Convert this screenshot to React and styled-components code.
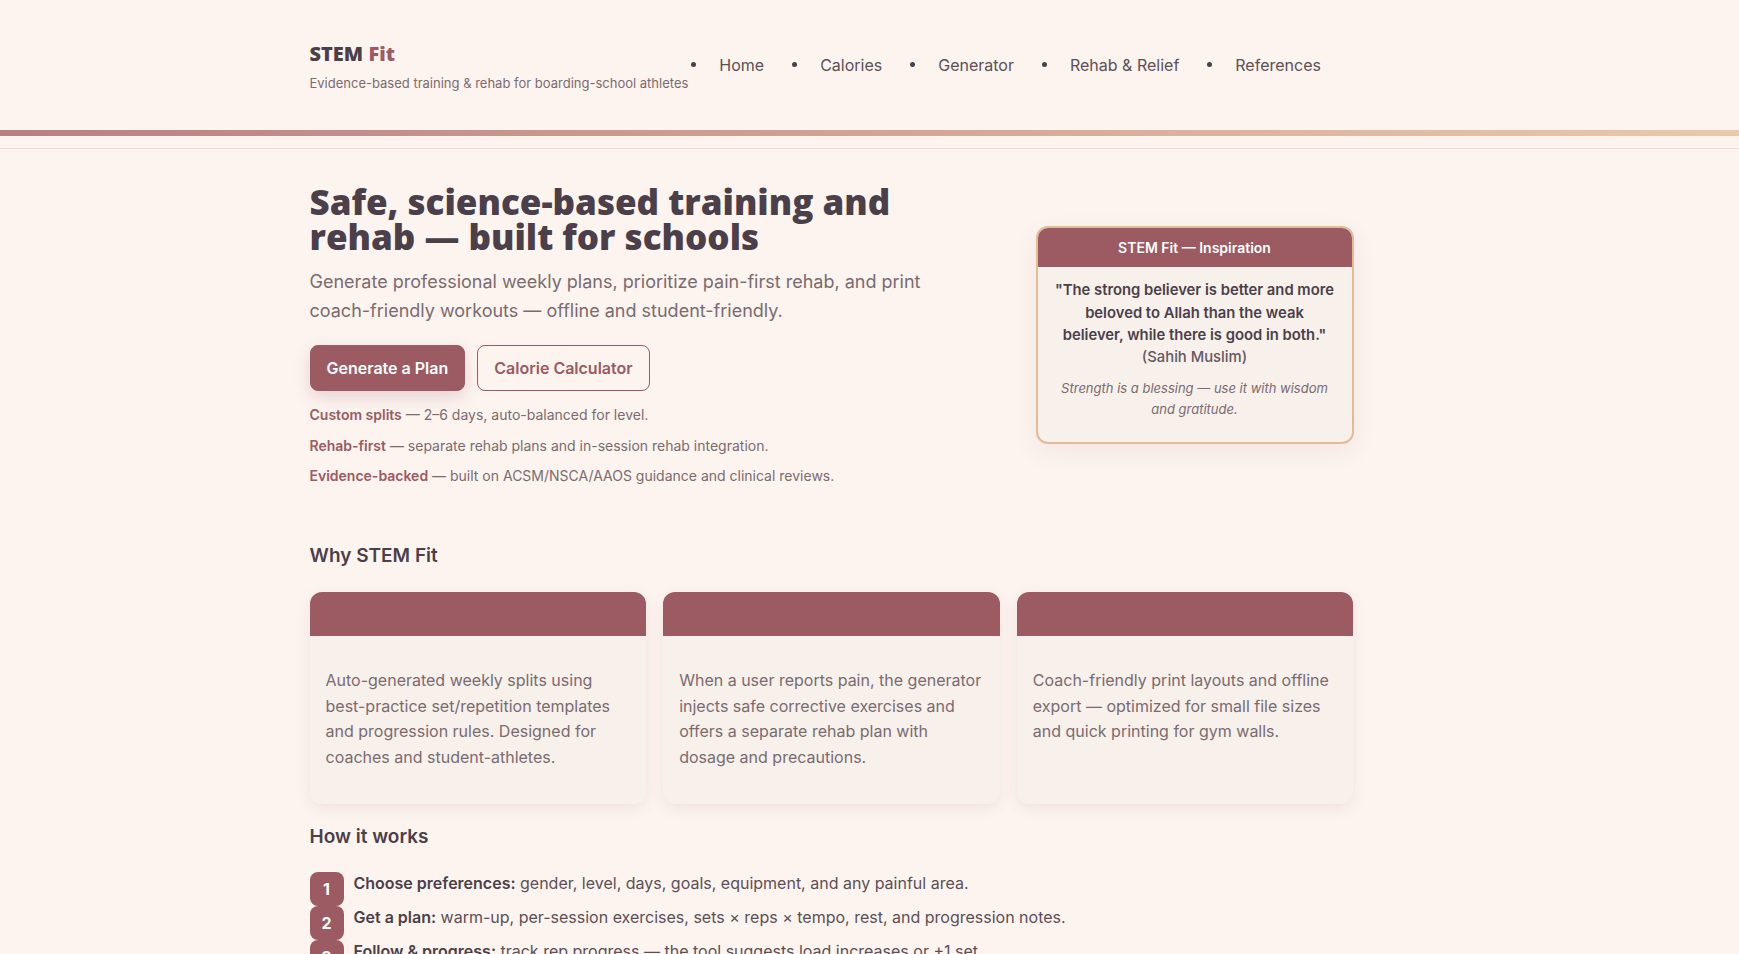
import React from "react";
import styled, { createGlobalStyle } from "styled-components";

const C = {
  bg: "#fdf4ef",
  primary: "#9c5a62",
  dark: "#4b3f4a",
  text: "#5c4f57",
  muted: "#7b6b70",
  card: "#f7f0eb",
  tan: "#e3bb96",
};

const Global = createGlobalStyle`
  * { box-sizing: border-box; }
  body {
    margin: 0;
    background: ${C.bg};
    font-family: Inter, "Noto Sans", sans-serif;
    color: ${C.dark};
  }
  p { margin: 0; }
`;

const Container = styled.div`
  max-width: 1120px;
  margin: 0 auto;
`;

const Inner = styled.div`
  width: 1044px;
`;

const Header = styled.header`
  padding: 41px 0 38px;
`;

const HeaderRow = styled.div`
  display: flex;
  align-items: center;
`;

const Brand = styled.div`
  display: flex;
  flex-direction: column;
  gap: 7px;
`;

const Logo = styled.div`
  font-family: "Open Sans", Inter, sans-serif;
  font-weight: 800;
  font-size: 20px;
  color: ${C.dark};
  line-height: 26px;
  span { color: ${C.primary}; }
`;

const Tagline = styled.div`
  font-size: 13px;
  color: ${C.muted};
  line-height: 18px;
`;

const Nav = styled.nav`
  display: flex;
  align-items: center;
  gap: 28px;
  margin-left: 3px;
  padding-bottom: 4px;
`;

const NavItem = styled.a`
  display: flex;
  align-items: center;
  gap: 23px;
  font-size: 16px;
  color: ${C.text};
  text-decoration: none;
  &::before {
    content: "";
    width: 5px;
    height: 5px;
    border-radius: 50%;
    background: ${C.dark};
  }
`;

const GradientBar = styled.div`
  height: 6px;
  background: linear-gradient(90deg, #b98081 0%, #d3a396 50%, #ecc9a9 100%);
`;

const Divider = styled.div`
  margin-top: 12px;
  border-top: 1px solid #efdcd7;
`;

const Hero = styled.section`
  display: grid;
  grid-template-columns: 1fr 318px;
  column-gap: 66px;
  align-items: center;
  padding-top: 35px;
`;

const HeroText = styled.div`
  display: flex;
  flex-direction: column;
`;

const Title = styled.h1`
  margin: 0;
  font-family: "Open Sans", Inter, sans-serif;
  font-weight: 800;
  font-size: 35px;
  line-height: 35px;
  color: ${C.dark};
`;

const Lead = styled.p`
  margin-top: 14px;
  font-size: 18px;
  line-height: 28.5px;
  color: ${C.muted};
`;

const Buttons = styled.div`
  display: flex;
  gap: 12px;
  margin-top: 20px;
`;

const Button = styled.a`
  display: inline-flex;
  align-items: center;
  justify-content: center;
  height: 46px;
  padding: 0 16px;
  border-radius: 8px;
  font-size: 16px;
  font-weight: 600;
  text-decoration: none;
  border: 1px solid ${C.primary};
  color: ${(p) => (p.$primary ? "#fff" : C.primary)};
  background: ${(p) => (p.$primary ? C.primary : "transparent")};
  box-shadow: ${(p) => (p.$primary ? "0 6px 16px rgba(156,90,98,0.22)" : "none")};
`;

const Features = styled.div`
  margin-top: 14px;
  display: flex;
  flex-direction: column;
  gap: 10.5px;
`;

const Feature = styled.p`
  font-size: 14px;
  line-height: 20px;
  color: ${C.muted};
  strong { color: ${C.primary}; font-weight: 600; }
`;

const QuoteCard = styled.aside`
  border: 2px solid ${C.tan};
  border-radius: 12px;
  background: ${C.card};
  overflow: hidden;
  box-shadow: 0 8px 24px rgba(120, 70, 60, 0.08);
`;

const QuoteHead = styled.div`
  background: ${C.primary};
  color: #fff;
  font-weight: 600;
  font-size: 14px;
  height: 39px;
  display: flex;
  align-items: center;
  justify-content: center;
`;

const QuoteBody = styled.div`
  padding: 12px 10px 22px;
  text-align: center;
`;

const QuoteText = styled.p`
  font-size: 14.8px;
  font-weight: 600;
  line-height: 22.4px;
  color: ${C.dark};
  span { display: block; font-weight: 500; color: #66585f; }
`;

const QuoteNote = styled.p`
  margin-top: 9px;
  font-size: 13px;
  font-style: italic;
  line-height: 21px;
  color: ${C.muted};
  padding: 0 8px;
`;

const SectionTitle = styled.h2`
  margin: 0;
  font-size: 19px;
  font-weight: 600;
  line-height: 26px;
  color: ${C.dark};
`;

const WhySection = styled.section`
  margin-top: 57px;
`;

const CardGrid = styled.div`
  display: grid;
  grid-template-columns: repeat(3, 1fr);
  gap: 17px;
  margin-top: 23px;
`;

const Card = styled.div`
  background: ${C.card};
  border-radius: 12px;
  overflow: hidden;
  box-shadow: 0 4px 14px rgba(120, 70, 60, 0.1);
`;

const CardBand = styled.div`
  height: 44px;
  background: ${C.primary};
`;

const CardText = styled.p`
  padding: 32px 16px 34px;
  font-size: 16px;
  line-height: 25.5px;
  color: ${C.muted};
`;

const HowSection = styled.section`
  margin-top: 20px;
`;

const Steps = styled.ol`
  list-style: none;
  margin: 22px 0 0;
  padding: 0;
  display: flex;
  flex-direction: column;
`;

const Step = styled.li`
  display: flex;
  align-items: flex-start;
  gap: 10px;
  height: 34px;
  font-size: 16px;
  line-height: 24px;
  color: ${C.text};
  strong { color: ${C.dark}; font-weight: 600; }
`;

const Badge = styled.span`
  flex: none;
  width: 34px;
  height: 34px;
  border-radius: 8px;
  background: ${C.primary};
  color: #fff;
  font-weight: 700;
  font-size: 16px;
  display: flex;
  align-items: center;
  justify-content: center;
`;

const StepText = styled.span`
  margin-top: -1px;
`;

const navLinks = ["Home", "Calories", "Generator", "Rehab & Relief", "References"];

const cards = [
  "Auto-generated weekly splits using best-practice set/repetition templates and progression rules. Designed for coaches and student-athletes.",
  "When a user reports pain, the generator injects safe corrective exercises and offers a separate rehab plan with dosage and precautions.",
  "Coach-friendly print layouts and offline export — optimized for small file sizes and quick printing for gym walls.",
];

const steps = [
  ["Choose preferences:", " gender, level, days, goals, equipment, and any painful area."],
  ["Get a plan:", " warm-up, per-session exercises, sets × reps × tempo, rest, and progression notes."],
  ["Follow & progress:", " track rep progress — the tool suggests load increases or +1 set."],
];

export default function App() {
  return (
    <>
      <Global />
      <Header>
        <Container>
          <HeaderRow>
            <Brand>
              <Logo>
                STEM <span>Fit</span>
              </Logo>
              <Tagline>Evidence-based training &amp; rehab for boarding-school athletes</Tagline>
            </Brand>
            <Nav>
              {navLinks.map((l) => (
                <NavItem key={l} href="#">
                  {l}
                </NavItem>
              ))}
            </Nav>
          </HeaderRow>
        </Container>
      </Header>
      <GradientBar />
      <Divider />
      <Container>
        <Inner>
          <Hero>
            <HeroText>
              <Title>
                Safe, science-based training and rehab — built for schools
              </Title>
              <Lead>
                Generate professional weekly plans, prioritize pain-first rehab, and print
                coach-friendly workouts — offline and student-friendly.
              </Lead>
              <Buttons>
                <Button $primary href="#">Generate a Plan</Button>
                <Button href="#">Calorie Calculator</Button>
              </Buttons>
              <Features>
                <Feature>
                  <strong>Custom splits</strong> — 2–6 days, auto-balanced for level.
                </Feature>
                <Feature>
                  <strong>Rehab-first</strong> — separate rehab plans and in-session rehab integration.
                </Feature>
                <Feature>
                  <strong>Evidence-backed</strong> — built on ACSM/NSCA/AAOS guidance and clinical reviews.
                </Feature>
              </Features>
            </HeroText>
            <QuoteCard>
              <QuoteHead>STEM Fit — Inspiration</QuoteHead>
              <QuoteBody>
                <QuoteText>
                  "The strong believer is better and more beloved to Allah than the weak
                  <br />
                  believer, while there is good in both."
                  <span>(Sahih Muslim)</span>
                </QuoteText>
                <QuoteNote>Strength is a blessing — use it with wisdom and gratitude.</QuoteNote>
              </QuoteBody>
            </QuoteCard>
          </Hero>

          <WhySection>
            <SectionTitle>Why STEM Fit</SectionTitle>
            <CardGrid>
              {cards.map((t, i) => (
                <Card key={i}>
                  <CardBand />
                  <CardText>{t}</CardText>
                </Card>
              ))}
            </CardGrid>
          </WhySection>

          <HowSection>
            <SectionTitle>How it works</SectionTitle>
            <Steps>
              {steps.map(([b, t], i) => (
                <Step key={i}>
                  <Badge>{i + 1}</Badge>
                  <StepText>
                    <strong>{b}</strong>
                    {t}
                  </StepText>
                </Step>
              ))}
            </Steps>
          </HowSection>
        </Inner>
      </Container>
    </>
  );
}
